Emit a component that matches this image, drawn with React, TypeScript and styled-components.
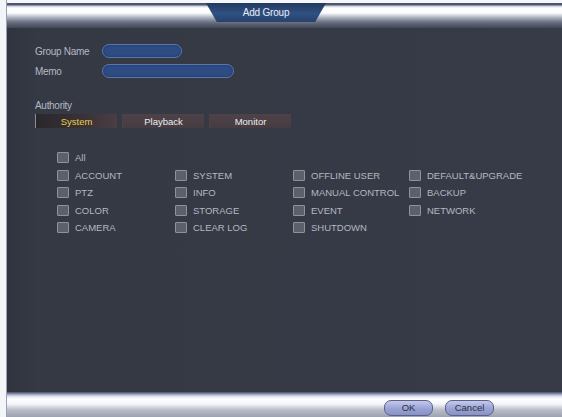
import React from 'react';
import styled, { createGlobalStyle } from 'styled-components';

const GlobalStyle = createGlobalStyle`
  html, body {
    margin: 0;
    padding: 0;
    background: #ffffff;
  }
  body {
    font-family: "Liberation Sans", Arial, sans-serif;
  }
`;

const Page = styled.div`
  width: 562px;
  height: 417px;
  padding-left: 6px;
  box-sizing: border-box;
  display: flex;
  background: #f4f5f8;
`;

const Window = styled.div`
  flex: 1;
  display: flex;
  flex-direction: column;
  border-left: 1px solid #9aa0ae;
`;

const Header = styled.div`
  height: 28px;
  display: flex;
  padding-left: 199px;
  background: linear-gradient(
    to bottom,
    #f6f7fa 0px,
    #f6f7fa 3px,
    #4a5068 3px,
    #525a74 5px,
    #c8cce0 6px,
    #ffffff 8px,
    #fbfbfd 13px,
    #a4aab8 18px,
    #6c7282 22px,
    #555b6a 25px,
    #424756 28px
  );
`;

const TitleTab = styled.div`
  margin-top: 3px;
  width: 120px;
  height: 19px;
  display: flex;
  align-items: center;
  justify-content: center;
  background: linear-gradient(to bottom, #23395e 0%, #2f5183 55%, #27416a 100%);
  clip-path: polygon(0 0, 100% 0, 91% 100%, 9% 100%);
  color: #e8ecf6;
  font-size: 10px;
  letter-spacing: -0.2px;
`;

const Body = styled.div`
  flex: 1;
  background: linear-gradient(to right, #30343f 0px, #353944 30px, #373b47 100%);
  padding: 16px 0 0 28px;
  display: flex;
  flex-direction: column;
`;

const FieldRow = styled.div`
  display: grid;
  grid-template-columns: 67px auto;
  align-items: center;
  height: 14px;
  margin-bottom: 6px;
`;

const Label = styled.span`
  color: #b4b8c4;
  font-size: 10px;
  letter-spacing: -0.3px;
`;

const TextInput = styled.div<{ $w: number }>`
  width: ${({ $w }) => $w}px;
  height: 12px;
  border-radius: 7px;
  border: 1px solid #5578b4;
  background: #2e4b82;
  box-shadow: inset 0 0 2px #1c2f55;
`;

const Section = styled(Label)`
  margin-top: 16px;
  display: block;
`;

const TabBar = styled.div`
  display: flex;
  gap: 5px;
  margin-top: 3px;
`;

const Tab = styled.div<{ $active?: boolean }>`
  width: 82px;
  height: 14px;
  display: flex;
  align-items: center;
  justify-content: center;
  font-size: 9.5px;
  color: ${({ $active }) => ($active ? '#e8cf4a' : '#eceef2')};
  background: ${({ $active }) =>
    $active
      ? 'linear-gradient(to right, #2a272c, #3a3237 60%, #4a3e44)'
      : 'linear-gradient(to bottom, #4d4248, #463c42)'};
  border-left: 1px solid ${({ $active }) => ($active ? '#8c8c94' : '#4d4248')};
  box-sizing: border-box;
`;

const Perms = styled.div`
  margin-top: 21px;
  margin-left: 22px;
  display: flex;
  flex-direction: column;
`;

const Grid = styled.div`
  display: grid;
  grid-template-columns: 118px 118px 116px auto;
  grid-template-rows: repeat(4, 17.5px);
  grid-auto-flow: column;
`;

const Item = styled.div`
  display: flex;
  align-items: center;
  height: 17.5px;
  gap: 6px;
`;

const Box = styled.span`
  width: 10px;
  height: 9px;
  border: 1px solid #8e929c;
  background: #5c606a;
  border-radius: 1px;
  flex: none;
`;

const ItemText = styled.span`
  color: #b4b8c2;
  font-size: 9.5px;
  white-space: nowrap;
`;

const Footer = styled.div`
  height: 25px;
  box-sizing: border-box;
  display: flex;
  justify-content: flex-end;
  align-items: center;
  gap: 12px;
  padding: 6px 68px 0 0;
  background: linear-gradient(
    to bottom,
    #4a5060 0px,
    #8d94b0 2px,
    #d8dcf0 4px,
    #ffffff 7px,
    #f4f5f9 12px,
    #b8bcc8 18px,
    #9da2b0 25px
  );
`;

const Button = styled.div`
  width: 47px;
  height: 14px;
  border-radius: 7px;
  border: 1px solid #5a6088;
  background: linear-gradient(to bottom, #c4c9ec 0%, #9aa2d4 55%, #8a92c4 100%);
  display: flex;
  align-items: center;
  justify-content: center;
  font-size: 9.5px;
  color: #2c3040;
`;

const columns = [
  ['ACCOUNT', 'PTZ', 'COLOR', 'CAMERA'],
  ['SYSTEM', 'INFO', 'STORAGE', 'CLEAR LOG'],
  ['OFFLINE USER', 'MANUAL CONTROL', 'EVENT', 'SHUTDOWN'],
  ['DEFAULT&UPGRADE', 'BACKUP', 'NETWORK'],
];

const Check: React.FC<{ label: string }> = ({ label }) => (
  <Item>
    <Box />
    <ItemText>{label}</ItemText>
  </Item>
);

export default function App() {
  return (
    <>
      <GlobalStyle />
      <Page>
        <Window>
          <Header>
            <TitleTab>Add Group</TitleTab>
          </Header>
          <Body>
            <FieldRow>
              <Label>Group Name</Label>
              <TextInput $w={78} />
            </FieldRow>
            <FieldRow>
              <Label>Memo</Label>
              <TextInput $w={130} />
            </FieldRow>
            <Section>Authority</Section>
            <TabBar>
              <Tab $active>System</Tab>
              <Tab>Playback</Tab>
              <Tab>Monitor</Tab>
            </TabBar>
            <Perms>
              <Check label="All" />
              <Grid>
                {columns.map((col, ci) =>
                  col.map((label) => <Check key={`${ci}-${label}`} label={label} />)
                )}
              </Grid>
            </Perms>
          </Body>
          <Footer>
            <Button>OK</Button>
            <Button>Cancel</Button>
          </Footer>
        </Window>
      </Page>
    </>
  );
}
